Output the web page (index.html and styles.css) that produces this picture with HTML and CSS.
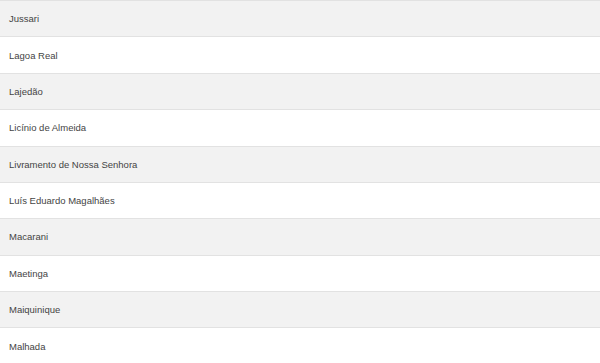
FILE: index.html
```html
<!DOCTYPE html>
<html>
<head>
<meta charset="utf-8">
<link rel="stylesheet" href="styles.css">
</head>
<body>
<div class="list">
  <div class="row odd">Jussari</div>
  <div class="row">Lagoa Real</div>
  <div class="row odd">Lajedão</div>
  <div class="row">Licínio de Almeida</div>
  <div class="row odd">Livramento de Nossa Senhora</div>
  <div class="row">Luís Eduardo Magalhães</div>
  <div class="row odd">Macarani</div>
  <div class="row">Maetinga</div>
  <div class="row odd">Maiquinique</div>
  <div class="row">Malhada</div>
</div>
</body>
</html>
```

FILE: styles.css
```css
html, body {
  margin: 0;
  padding: 0;
  background: #fff;
}
.list {
  display: flex;
  flex-direction: column;
  font-family: "Liberation Sans", Arial, sans-serif;
  font-size: 9.5px;
  color: #444;
}
.row {
  box-sizing: border-box;
  height: 36.375px;
  border-top: 1px solid #e2e2e2;
  padding: 0 9px;
  display: flex;
  align-items: center;
  background: #fff;
}
.row.odd {
  background: #f2f2f2;
}
```
